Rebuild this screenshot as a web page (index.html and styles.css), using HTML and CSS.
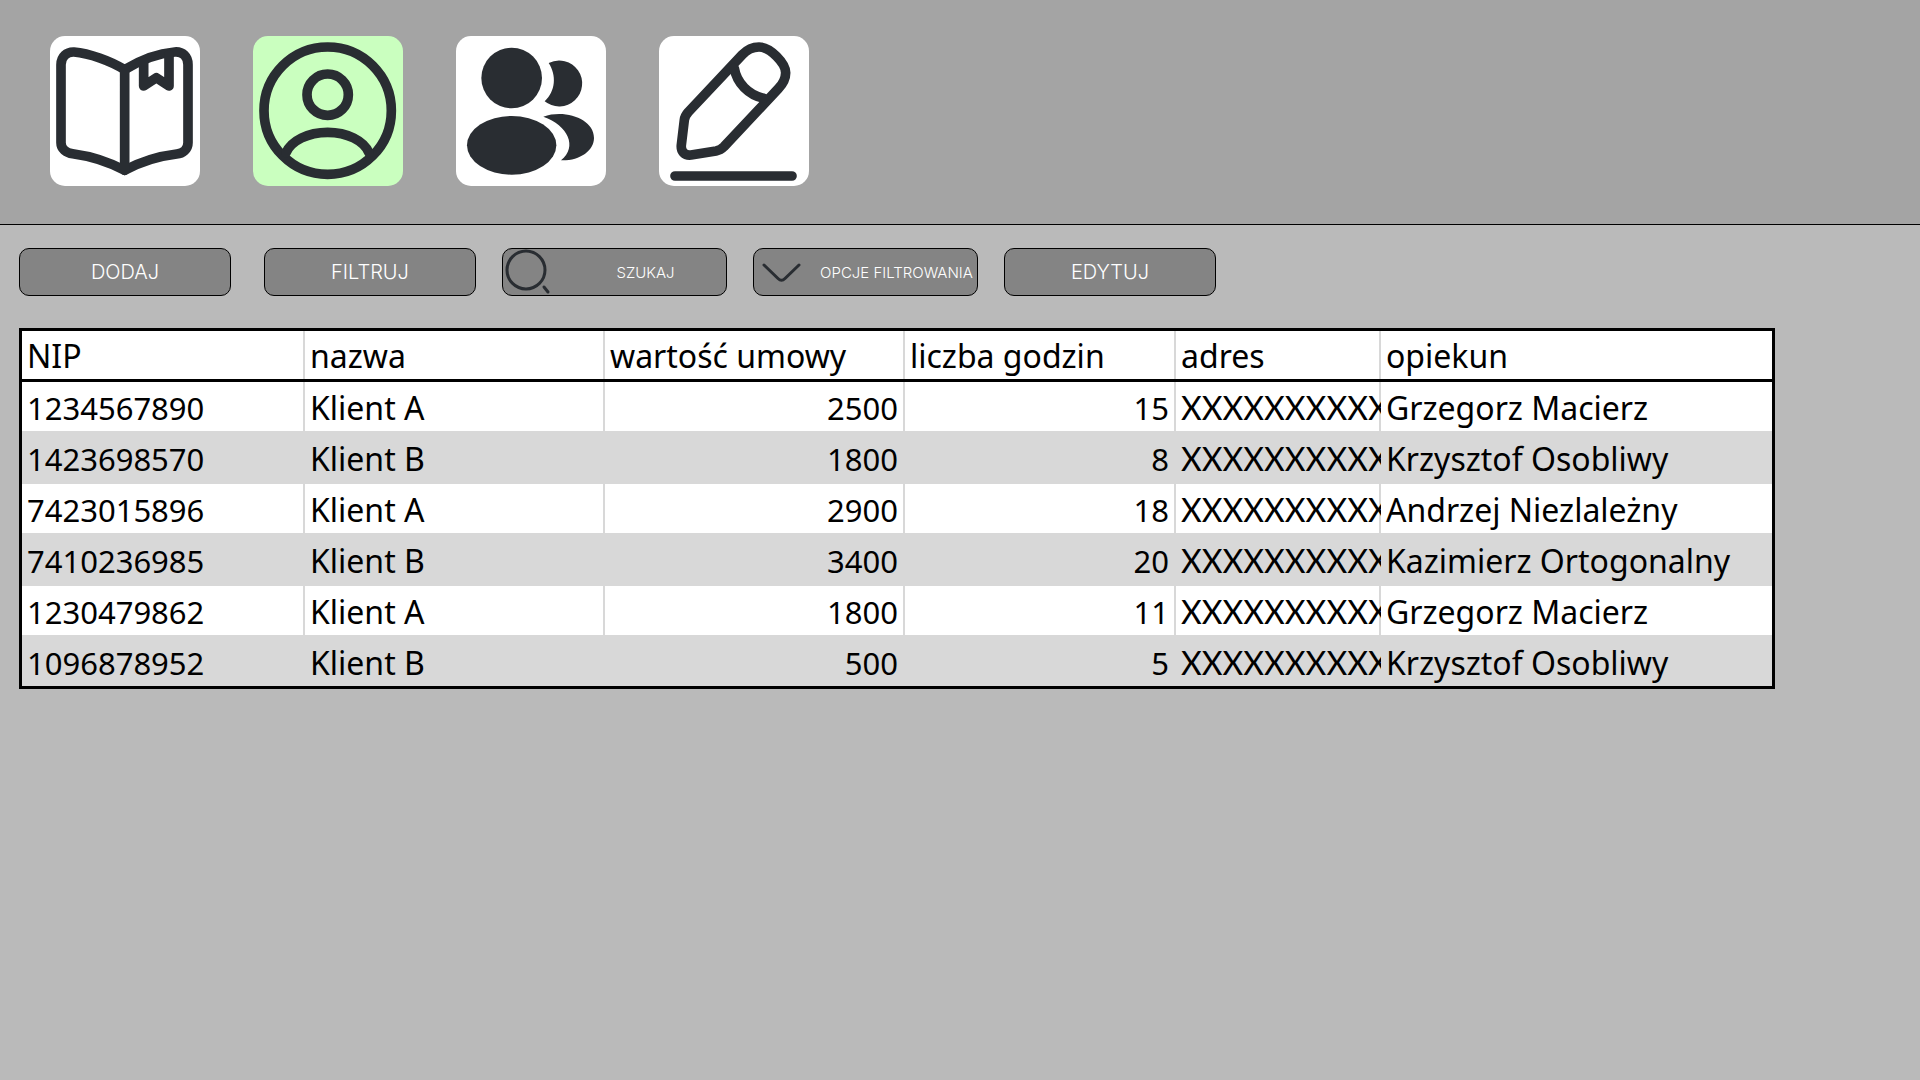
FILE: index.html
```html
<!DOCTYPE html>
<html lang="pl">
<head>
<meta charset="utf-8">
<title>Klienci</title>
<link rel="stylesheet" href="styles.css">
</head>
<body>
<header class="topbar">
  <nav class="nav">
    <a class="tile" href="#katalog" aria-label="Katalog">
      <svg viewBox="0 0 450 450" class="line-icon">
        <path d="M33 320V86C33 62 50 47 72 48C118 52 180 74 224 101C268 74 325 52 374 48C398 46 414 62 414 86V320C414 340 398 352 380 354C330 360 270 378 224 403C178 378 120 360 68 353C48 350 33 338 33 320Z"/>
        <path d="M224 101V403M281 78V150L319 125L357 150V56"/>
      </svg>
    </a>
    <a class="tile tile-active" href="#klienci" aria-label="Klienci" aria-current="page">
      <svg viewBox="0 0 450 450" class="line-icon">
        <circle cx="224" cy="224" r="191"/>
        <circle cx="224" cy="176" r="62"/>
        <path d="M99 350C115 314 165 289 224 289S332 314 348 350"/>
      </svg>
    </a>
    <a class="tile" href="#pracownicy" aria-label="Pracownicy">
      <svg viewBox="0 0 450 450" class="solid-icon">
        <circle cx="167" cy="126" r="91"/>
        <ellipse cx="167" cy="328" rx="134" ry="88"/>
        <path d="M278 81A69 69 0 1 1 266 196C299 165 302 118 278 81Z"/>
        <path d="M262 242C330 219 414 250 414 306C414 345 370 375 315 373C366 332 336 268 262 242Z"/>
      </svg>
    </a>
    <a class="tile" href="#edycja" aria-label="Edycja">
      <svg viewBox="0 0 450 450" class="line-icon">
        <path d="M76 252L67 327C65 346 76 359 96 357L171 345C181 343 188 339 195 332L358 158C372 143 380 128 380 110C380 82 334 33 300 33C281 33 266 39 250 56L88 228C80 237 77 243 76 252Z"/>
        <path d="M226 97C233 141 269 178 314 187M48 420H399"/>
      </svg>
    </a>
  </nav>
</header>
<main class="content">
  <div class="toolbar">
    <button class="control button button-add" type="button">DODAJ</button>
    <button class="control button" type="button">FILTRUJ</button>
    <label class="control field" for="search">
      <svg class="field-icon" viewBox="0 0 62 46"><circle cx="23" cy="21" r="19"/><path d="M41 38L45 43"/></svg>
      <input class="field-input" id="search" type="text" placeholder="SZUKAJ" aria-label="Szukaj">
    </label>
    <label class="control field" for="options">
      <svg class="field-icon" viewBox="0 0 62 46"><path d="M10 16L24 29.500Q27.500 33 31 29.500L45 16"/></svg>
      <select class="field-input" id="options" aria-label="Opcje filtrowania"><option>OPCJE FILTROWANIA</option></select>
    </label>
    <button class="control button" type="button">EDYTUJ</button>
  </div>
  <table class="clients">
    <colgroup><col class="col-nip"><col class="col-wide"><col class="col-wide"><col class="col-hours"><col class="col-address"><col></colgroup>
    <thead>
      <tr><th>NIP</th><th>nazwa</th><th>wartość umowy</th><th>liczba godzin</th><th>adres</th><th>opiekun</th></tr>
    </thead>
    <tbody>
      <tr><td class="nip">1234567890</td><td>Klient A</td><td class="num">2500</td><td class="num">15</td><td class="address">XXXXXXXXXX</td><td>Grzegorz Macierz</td></tr>
      <tr><td class="nip">1423698570</td><td>Klient B</td><td class="num">1800</td><td class="num">8</td><td class="address">XXXXXXXXXX</td><td>Krzysztof Osobliwy</td></tr>
      <tr><td class="nip">7423015896</td><td>Klient A</td><td class="num">2900</td><td class="num">18</td><td class="address">XXXXXXXXXX</td><td>Andrzej Niezlależny</td></tr>
      <tr><td class="nip">7410236985</td><td>Klient B</td><td class="num">3400</td><td class="num">20</td><td class="address">XXXXXXXXXX</td><td>Kazimierz Ortogonalny</td></tr>
      <tr><td class="nip">1230479862</td><td>Klient A</td><td class="num">1800</td><td class="num">11</td><td class="address">XXXXXXXXXX</td><td>Grzegorz Macierz</td></tr>
      <tr><td class="nip">1096878952</td><td>Klient B</td><td class="num">500</td><td class="num">5</td><td class="address">XXXXXXXXXX</td><td>Krzysztof Osobliwy</td></tr>
    </tbody>
  </table>
</main>
</body>
</html>
```
FILE: styles.css
```css
* { box-sizing: border-box; }

body {
  margin: 0;
  min-height: 100vh;
  background: #bababa;
  font-family: Inter, "Liberation Sans", sans-serif;
}

.topbar {
  padding: 36px 50px 38px;
  background: #a4a4a4;
  border-bottom: 1px solid #000;
}

.nav { display: flex; gap: 53px; }

.tile {
  width: 150px;
  height: 150px;
  border-radius: 15px;
  background: #fff;
}

.tile-active { background: #caffbf; }

.tile svg { display: block; width: 100%; height: 100%; }

.line-icon {
  fill: none;
  stroke: #292d32;
  stroke-width: 29;
  stroke-linecap: round;
  stroke-linejoin: round;
}

.solid-icon { fill: #292d32; }

.content { padding: 23px 145px 32px 19px; }

.toolbar { display: flex; gap: 26px; margin-bottom: 32px; }

.control {
  height: 48px;
  border: 1px solid #000;
  border-radius: 10px;
  background: #848484;
  color: #fff;
  font-family: inherit;
  font-weight: 300;
}

.button { width: 212px; padding: 0; font-size: 20px; }

.button-add { margin-right: 7px; }

.field { display: flex; width: 225px; }

.field-icon {
  flex: none;
  width: 62px;
  height: 46px;
  fill: none;
  stroke: #292d32;
  stroke-width: 3;
  stroke-linecap: round;
}

.field-input {
  flex: 1;
  min-width: 0;
  padding: 0;
  border: 0;
  background: none;
  color: inherit;
  font: inherit;
  font-size: 15px;
  text-align: center;
  text-align-last: center;
  appearance: none;
}

.field-input::placeholder { color: #fff; opacity: 1; }

.clients {
  width: 100%;
  table-layout: fixed;
  border: 3px solid #000;
  border-collapse: separate;
  border-spacing: 0;
  background: #fff;
  color: #000;
  font-family: "Noto Sans", "Open Sans", sans-serif;
  font-size: 32px;
  line-height: 38px;
}

.col-nip { width: 283px; }
.col-wide { width: 300px; }
.col-hours { width: 271px; }
.col-address { width: 205px; }

.clients th,
.clients td {
  height: 49px;
  padding: 2px 7px 0 5px;
  box-shadow: inset -2px 0 #d8d8d8;
  font-weight: 400;
  text-align: left;
  white-space: nowrap;
  overflow: hidden;
}

.clients th { height: 51px; border-bottom: 3px solid #000; }

.clients th:last-child,
.clients td:last-child { box-shadow: none; }

.clients tbody tr:nth-child(even) { background: #d8d8d8; }
.clients tbody tr:nth-child(even) td { height: 53px; }
.clients tbody tr:last-child td { height: 51px; padding-top: 4px; }

.clients td.nip,
.clients td.num { font-size: 31px; }

/* Lato's wide capitals fill the address column up to its rule */
.clients td.address { padding-right: 2px; font-family: Lato, sans-serif; }
.clients td.num { text-align: right; }
```
